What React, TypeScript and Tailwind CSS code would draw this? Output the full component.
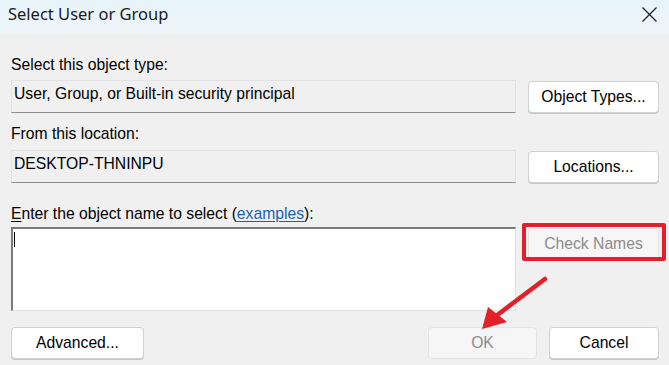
import React from 'react';

const btn =
  'h-[32px] rounded-[4px] border border-[#d0d0d0] bg-white text-[15.7px] text-black flex items-center justify-center shadow-[0_1px_0_#c8c8c8]';
const btnDisabled =
  'h-[32px] rounded-[4px] border border-[#e4e4e4] bg-[#f6f6f6] text-[15.7px] text-[#8c8c8c] flex items-center justify-center';
const field =
  'h-[33px] w-[505px] border border-[#e2e2e2] border-b-[#8c8c8c] bg-[#f0f0f0] px-[2px] pt-[4px] text-[15.7px] leading-[17px] text-black';

const Label: React.FC<{ children: React.ReactNode; className?: string }> = ({ children, className }) => (
  <div className={`text-[15.7px] leading-[17px] text-black ${className ?? ''}`}>{children}</div>
);

export default function App() {
  return (
    <div
      className="relative w-[669px] h-[365px] bg-[#f0f0f0] flex flex-col overflow-hidden"
      style={{ fontFamily: '"Liberation Sans", Arial, sans-serif' }}
    >
      {/* title bar */}
      <div className="h-[34px] shrink-0 bg-gradient-to-b from-[#e7f4fa] to-[#eef5f8] flex items-center justify-between pl-[8px] pr-[11px]">
        <span
          className="text-[16.5px] text-[#1a1a1a] -mt-[5px]"
          style={{ fontFamily: '"Noto Sans", "Open Sans", sans-serif' }}
        >
          Select User or Group
        </span>
        <svg width="17" height="17" viewBox="0 0 17 17" className="-mt-[5px]">
          <path d="M1.5 1.5 L15.5 15.5 M15.5 1.5 L1.5 15.5" stroke="#222" strokeWidth="1.3" fill="none" />
        </svg>
      </div>

      <div className="flex flex-col pl-[11px] pr-[10px]">
        <Label className="mt-[22px]">Select this object type:</Label>
        <div className="mt-[7px] flex items-start gap-[12px]">
          <div className={field}>User, Group, or Built-in security principal</div>
          <button className={`${btn} w-[131px] mt-[1px]`}>Object Types...</button>
        </div>

        <Label className="mt-[12px]">From this location:</Label>
        <div className="mt-[8px] flex items-start gap-[12px]">
          <div className={field}>DESKTOP-THNINPU</div>
          <button className={`${btn} w-[131px] mt-[1px]`}>Locations...</button>
        </div>

        <Label className="mt-[22px]">
          <span className="underline underline-offset-2">E</span>nter the object name to select (
          <span className="text-[#1a5fb4] underline underline-offset-2">examples</span>):
        </Label>
        <div className="mt-[5px] flex items-start gap-[12px]">
          <div className="relative h-[84px] w-[505px] bg-white border-t-2 border-l-2 border-t-[#7b7b7b] border-l-[#7b7b7b] border-r border-b border-r-[#e0e0e0] border-b-[#e0e0e0]">
            <div className="absolute left-[1px] top-[3px] w-[1px] h-[15px] bg-black" />
          </div>
          <div className="relative mt-[1px]">
            <button className={`${btnDisabled} w-[131px] h-[30px]`}>Check Names</button>
            <div className="absolute -left-[6px] -top-[5px] w-[144px] h-[38px] border-[4px] border-[#e0202c] rounded-[2px] pointer-events-none" />
          </div>
        </div>

        <div className="mt-[16px] flex items-start">
          <button className={`${btn} w-[133px]`}>Advanced...</button>
          <div className="flex-1" />
          <button className={`${btnDisabled} w-[109px]`}>OK</button>
          <button className={`${btn} w-[110px] ml-[12px]`}>Cancel</button>
        </div>
      </div>

      {/* annotation arrow */}
      <svg className="absolute left-0 top-0 pointer-events-none" width="669" height="365">
        <line x1="545" y1="279" x2="496" y2="316" stroke="#e3202a" strokeWidth="4.5" strokeLinecap="round" />
        <polygon points="482,329 488,307 507,322" fill="#e3202a" />
      </svg>
    </div>
  );
}
